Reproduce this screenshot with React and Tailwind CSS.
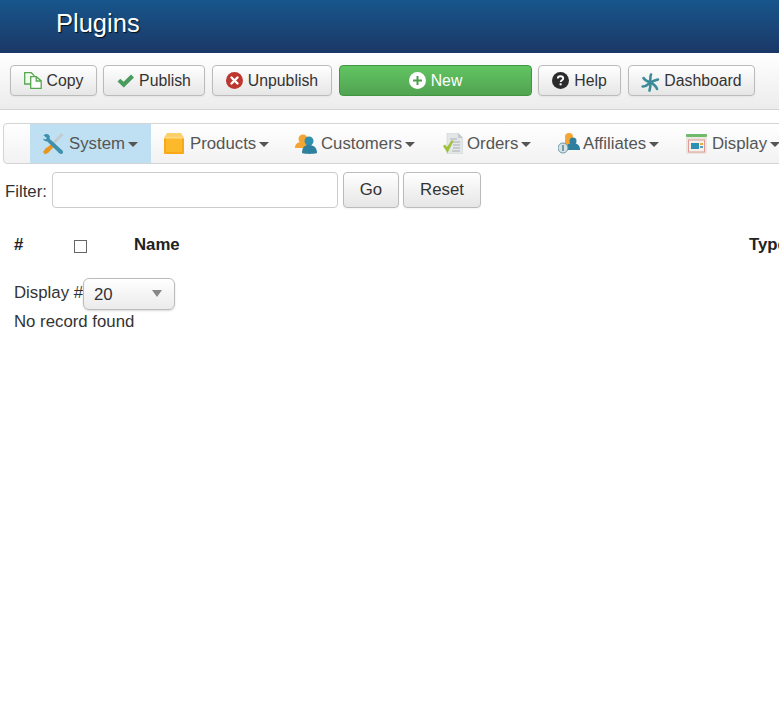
const btn =
  "flex items-center justify-center rounded-[4px] border border-[#bbb] bg-gradient-to-b from-white to-[#e6e6e6] text-[#333] shadow-[inset_0_1px_0_rgba(255,255,255,0.2),0_1px_2px_rgba(0,0,0,0.05)]";

function CopyIcon() {
  return (
    <svg width="18" height="17" viewBox="0 0 18 17" fill="none" stroke="#55a84f" strokeWidth="1.3">
      <path d="M.7.700h6.600l2.700 2.700v8.600H.7z" fill="#f4faf0" />
      <path d="M6.700 4.700h5.600l4.900 4.200v7.400H6.700z" fill="#fff" />
      <path d="M12.200 4.700v4.300h5" />
    </svg>
  );
}

function CheckIcon() {
  return (
    <svg width="18" height="14" viewBox="0 0 18 14">
      <path d="M.5 7.400l2.800-2.700 3.300 3.100L14 .6 17 3.400 6.800 13.400z" fill="#4a9b5c" />
    </svg>
  );
}

function XCircleIcon() {
  return (
    <svg width="17" height="17" viewBox="0 0 17 17">
      <circle cx="8.500" cy="8.500" r="8.500" fill="#bd362f" />
      <path d="M5.500 5.500l6 6M11.500 5.500l-6 6" stroke="#fff" strokeWidth="2.400" strokeLinecap="round" />
    </svg>
  );
}

function PlusCircleIcon() {
  return (
    <svg width="17" height="17" viewBox="0 0 17 17">
      <circle cx="8.500" cy="8.500" r="8.500" fill="#fff" />
      <path d="M8.500 4v9M4 8.500h9" stroke="#4a9f4e" strokeWidth="2" />
    </svg>
  );
}

function HelpIcon() {
  return (
    <svg width="17" height="17" viewBox="0 0 17 17">
      <circle cx="8.500" cy="8.500" r="8.500" fill="#2b2b2b" />
      <path d="M5.800 6.600c0-1.600 1.200-2.400 2.700-2.400s2.700.8 2.700 2.200c0 1.900-2.500 1.800-2.500 3.700" fill="none" stroke="#fff" strokeWidth="1.900" />
      <rect x="7.600" y="11.300" width="2" height="2" fill="#fff" />
    </svg>
  );
}

function DashboardIcon() {
  return (
    <svg width="19" height="19" viewBox="0 0 19 19" className="mt-[3px]" fill="none" stroke="#3b8b99" strokeWidth="2.600" strokeLinecap="round">
      <path d="M9.500 9.500C9.200 6.500 9 4 10 1.500" />
      <path d="M9.500 9.500C12 8 14 7.200 17 6.500" />
      <path d="M9.500 9.500c2.500 1.500 5.500 3 6.500 6.500" />
      <path d="M9.500 9.500C9.500 13 9.200 15.500 8.500 17.500" />
      <path d="M9.500 9.500C7 11.500 5 13.500 1.700 13.500" />
      <path d="M9.500 9.500C6.500 8.500 4 7.500 2.500 5" />
    </svg>
  );
}

function SystemIcon() {
  return (
    <svg width="22" height="22" viewBox="0 0 22 22">
      <path d="M20.500 1L9 12.500" stroke="#c3cbd0" strokeWidth="3" />
      <path d="M10.500 10.500L3.500 15.500 1 19l2 2.500 3.500-2L12.500 13z" fill="#e8961e" />
      <path d="M1.500 2.500C3 .8 5.500.5 7 2c1 1.200 1 2.500.6 3.700l13 12c1 1.300.4 3-1.200 3.300-1 .2-1.700-.2-2.400-.9L5.300 8.500C3.600 8.800 1.500 7.500 1 5.500L3.500 6.500 5 5z" fill="#3e90ad" />
    </svg>
  );
}

function ProductsIcon() {
  return (
    <svg width="20" height="21" viewBox="0 0 20 21">
      <path d="M3 0h14l3 5H0z" fill="#fcd066" />
      <rect x="0" y="4" width="20" height="17" rx="1" fill="#f9a917" />
      <rect x="2" y="5" width="16" height="14" fill="#fdb92c" />
      <path d="M0 4h20v1.500H0z" fill="#fdd988" />
    </svg>
  );
}

function CustomersIcon() {
  return (
    <svg width="22" height="20" viewBox="0 0 22 20">
      <circle cx="8" cy="5" r="4.500" fill="#f5a533" />
      <path d="M0 14c0-5 3-6 8-6s6 2 6 6z" fill="#f5a533" />
      <circle cx="14" cy="7" r="4.500" fill="#2f8fae" />
      <path d="M7 19c0-6 3-8 7-8s8 2 8 8c-4 1.200-11 1.200-15 0z" fill="#2f7f9f" />
    </svg>
  );
}

function OrdersIcon() {
  return (
    <svg width="20" height="21" viewBox="0 0 20 21">
      <path d="M4 0h11l5 5v16H4z" fill="#e4e7e7" stroke="#cdd2d4" strokeWidth=".6" />
      <path d="M15 0v5h5z" fill="#c4cacc" />
      <path d="M7 6h7M7 9h10M10 12h7M10 15h7M9 18h8" stroke="#a9b0b3" strokeWidth="1" />
      <path d="M0 13l2-1.500 2 2.500 5-7 1.500 1L4.500 20z" fill="#9ec13b" />
    </svg>
  );
}

function AffiliatesIcon() {
  return (
    <svg width="22" height="21" viewBox="0 0 22 21">
      <circle cx="11" cy="4" r="4" fill="#f5a533" />
      <path d="M7 6h8v7H7z" fill="#f5a533" />
      <circle cx="15" cy="8" r="3.500" fill="#2f7f9f" />
      <path d="M7 17c0-5 4-7 8-7s7 2 7 7z" fill="#2f7f9f" />
      <circle cx="5" cy="15" r="5" fill="#d5e2e6" stroke="#6b98a8" />
      <rect x="4.300" y="12" width="1.400" height="6" fill="#4d7f90" />
    </svg>
  );
}

function DisplayIcon() {
  return (
    <svg width="21" height="20" viewBox="0 0 21 20">
      <rect x="0" y="0" width="21" height="20" rx="1" fill="#e9e7e0" />
      <rect x="0" y="0" width="21" height="3" rx="1" fill="#6fbb6a" />
      <rect x="2.500" y="6" width="16" height="12" fill="#f4f1ea" stroke="#dd9a98" />
      <rect x="5" y="9" width="8" height="6" fill="#2f8fb3" />
      <rect x="14" y="9" width="3" height="2" fill="#e8b23c" />
      <rect x="14" y="12" width="3" height="2" fill="#5a9ec0" />
    </svg>
  );
}

function Caret() {
  return <span className="ml-[3px] mt-[2px] h-0 w-0 border-x-[5.500px] border-t-[5px] border-x-transparent border-t-[#555]" />;
}

const menu = [
  { label: "System", icon: <SystemIcon />, cls: "w-[121px] pl-[12px] gap-[5px] bg-[#bfe0f3]" },
  { label: "Products", icon: <ProductsIcon />, cls: "w-[131px] pl-[13px] gap-[6px]" },
  { label: "Customers", icon: <CustomersIcon />, cls: "w-[148px] pl-[13px] gap-[4px]" },
  { label: "Orders", icon: <OrdersIcon />, cls: "w-[115px] pl-[13px] gap-[4px]" },
  { label: "Affiliates", icon: <AffiliatesIcon />, cls: "w-[128px] pl-[13px] gap-[3px]" },
  { label: "Display", icon: <DisplayIcon />, cls: "w-[120px] pl-[13px] gap-[5px]" },
];

export default function App() {
  return (
    <div className="h-[720px] w-[779px] overflow-hidden bg-white font-['Liberation_Sans',Arial,sans-serif] text-[16.8px] text-[#333]">
      <div className="flex h-[53px] items-center bg-gradient-to-b from-[#17568c] to-[#1a3867] pb-[7px] pl-[56px]">
        <h1 className="text-[25.500px] text-white [text-shadow:1px_1px_1px_rgba(0,0,0,0.8)]">Plugins</h1>
      </div>

      <div className="flex h-[57px] items-start border-b border-[#d4d4d4] bg-gradient-to-b from-white to-[#ececec] pl-[10px] pt-[12px] text-[15.800px]">
        <button className={`${btn} h-[31px] w-[87px] gap-[5px]`}><CopyIcon />Copy</button>
        <button className={`${btn} ml-[6px] h-[31px] w-[102px] gap-[4px]`}><CheckIcon />Publish</button>
        <button className={`${btn} ml-[7px] h-[31px] w-[120px] gap-[5px]`}><XCircleIcon />Unpublish</button>
        <button className="ml-[7px] flex h-[31px] w-[193px] items-center justify-center gap-[5px] rounded-[4px] border border-[#409740] bg-gradient-to-b from-[#62c462] to-[#51a351] text-white">
          <PlusCircleIcon />New
        </button>
        <button className={`${btn} ml-[6px] h-[31px] w-[83px] gap-[5px]`}><HelpIcon />Help</button>
        <button className={`${btn} ml-[7px] h-[31px] w-[127px] gap-[4px]`}><DashboardIcon />Dashboard</button>
      </div>

      <div className="ml-[3px] mt-[13px] flex h-[41px] w-[900px] rounded-l-[4px] border border-[#d4d4d4] bg-gradient-to-b from-white to-[#f2f2f2] pl-[26px]">
        {menu.map((item) => (
          <div key={item.label} className={`flex h-full shrink-0 items-center text-[#555] ${item.cls}`}>
            {item.icon}
            <span className="flex items-center">{item.label}<Caret /></span>
          </div>
        ))}
      </div>

      <div className="ml-[5px] mt-[8px] flex h-[36px] items-center">
        <span className="mr-[6px] mt-[4px] w-[41px]">Filter:</span>
        <input className="h-[36px] w-[286px] rounded-[4px] border border-[#ccc] bg-white" />
        <button className={`${btn} ml-[5px] h-[36px] w-[56px]`}>Go</button>
        <button className={`${btn} ml-[4px] h-[36px] w-[78px]`}>Reset</button>
      </div>

      <div className="ml-[14px] mt-[27px] flex h-[19px] items-center font-bold text-[#222]">
        <span className="w-[60px] shrink-0">#</span>
        <span className="mt-[3px] h-[13px] w-[13px] shrink-0 border border-[#666] bg-white" />
        <span className="ml-[47px] w-[615px] shrink-0">Name</span>
        <span className="whitespace-nowrap">Type</span>
      </div>

      <div className="ml-[14px] mt-[24px] flex h-[32px] items-center">
        <span className="mb-[3px] w-[69px] whitespace-nowrap">Display #</span>
        <div className="flex h-[32px] w-[92px] items-center justify-between rounded-[6px] border border-[#bbb] bg-gradient-to-b from-white to-[#ebebeb] pl-[10px] pr-[12px] shadow-[0_1px_2px_rgba(0,0,0,0.15)]">
          <span className="mt-[1px]">20</span>
          <span className="mb-[2px] h-0 w-0 border-x-[5px] border-t-[7px] border-x-transparent border-t-[#888]" />
        </div>
      </div>

      <div className="ml-[14px] leading-[23px]">No record found</div>
    </div>
  );
}
